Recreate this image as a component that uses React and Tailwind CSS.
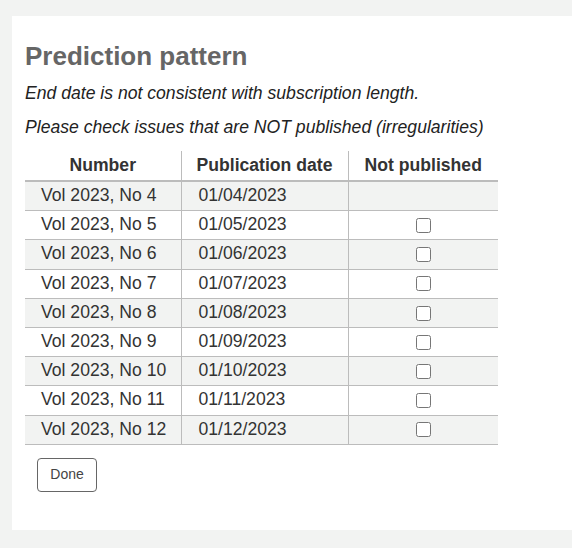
import React, { useState } from 'react'

const issues = [
  { number: 'Vol 2023, No 4', date: '01/04/2023', checkable: false },
  { number: 'Vol 2023, No 5', date: '01/05/2023', checkable: true },
  { number: 'Vol 2023, No 6', date: '01/06/2023', checkable: true },
  { number: 'Vol 2023, No 7', date: '01/07/2023', checkable: true },
  { number: 'Vol 2023, No 8', date: '01/08/2023', checkable: true },
  { number: 'Vol 2023, No 9', date: '01/09/2023', checkable: true },
  { number: 'Vol 2023, No 10', date: '01/10/2023', checkable: true },
  { number: 'Vol 2023, No 11', date: '01/11/2023', checkable: true },
  { number: 'Vol 2023, No 12', date: '01/12/2023', checkable: true }
]

const App = () => {
  const [notPublished, setNotPublished] = useState({})

  const toggle = (i) => setNotPublished((prev) => ({ ...prev, [i]: !prev[i] }))

  return (
    <div className="min-h-[548px] bg-[#f2f3f2] pt-[16px] pl-[12px] pb-[18px] font-['Liberation_Sans',Arial,sans-serif]">
      <div className="bg-white pt-[25px] pl-[13px] pb-[38px]">
        <h1 className="text-[26px] leading-[30px] font-bold text-[#666666]">Prediction pattern</h1>

        <p className="mt-[12px] text-[17.6px] leading-[20px] italic text-[#222222]">
          End date is not consistent with subscription length.
        </p>
        <p className="mt-[14px] text-[17.6px] leading-[20px] italic text-[#222222]">
          Please check issues that are NOT published (irregularities)
        </p>

        <table className="mt-[14px] w-[473px] border-collapse text-[17.6px] text-[#333333] table-fixed">
          <thead>
            <tr className="border-b-2 border-[#bcbcbc]">
              <th className="w-[156px] border-r border-[#bcbcbc] pt-[4px] pb-[5px] leading-[20px] text-center font-bold">Number</th>
              <th className="w-[167px] border-r border-[#bcbcbc] pt-[4px] pb-[5px] leading-[20px] text-center font-bold">Publication date</th>
              <th className="w-[150px] pt-[4px] pb-[5px] leading-[20px] text-center font-bold">Not published</th>
            </tr>
          </thead>
          <tbody>
            {issues.map((issue, i) => (
              <tr
                key={issue.number}
                className={'border-b border-[#bcbcbc] ' + (i % 2 === 0 ? 'bg-[#f2f3f2]' : 'bg-white')}
              >
                <td className="border-r border-[#bcbcbc] pt-[3px] pb-[5px] pl-[16px] leading-[20.2px]">{issue.number}</td>
                <td className="border-r border-[#bcbcbc] pt-[3px] pb-[5px] pl-[17px] leading-[20.2px]">{issue.date}</td>
                <td className="pt-[3px] pb-[5px] text-center leading-[20.2px]">
                  {issue.checkable && (
                    <input
                      type="checkbox"
                      checked={!!notPublished[i]}
                      onChange={() => toggle(i)}
                      className="align-middle m-0 w-[15px] h-[15px]"
                    />
                  )}
                </td>
              </tr>
            ))}
          </tbody>
        </table>

        <button
          type="button"
          className="mt-[13px] ml-[12px] w-[60px] h-[34px] rounded-[4px] border border-[#666666] bg-white text-[14px] text-[#444444]"
        >
          Done
        </button>
      </div>
    </div>
  )
}

export default App
